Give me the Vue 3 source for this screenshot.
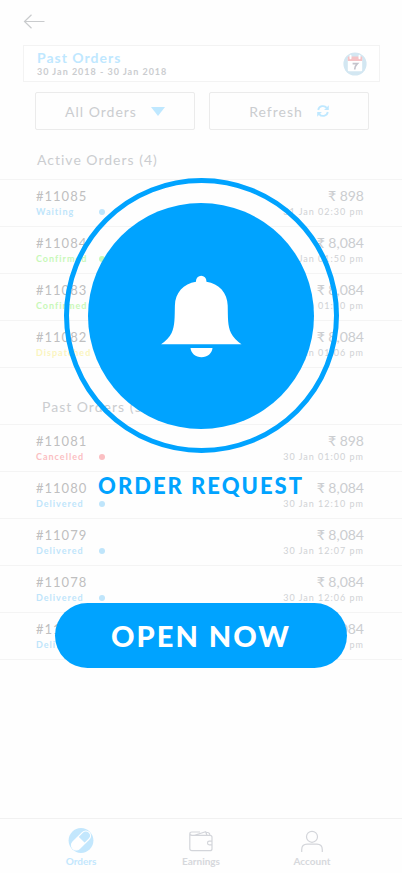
<script setup>
const sections = [
  {
    title: 'Active Orders (4)',
    key: 'active',
    orders: [
      { id: '#11085', status: 'Waiting', price: '₹ 898', time: '31 Jan 02:30 pm' },
      { id: '#11084', status: 'Confirmed', price: '₹ 8,084', time: '31 Jan 01:50 pm' },
      { id: '#11083', status: 'Confirmed', price: '₹ 8,084', time: '31 Jan 01:10 pm' },
      { id: '#11082', status: 'Dispatched', price: '₹ 8,084', time: '31 Jan 01:06 pm' },
    ],
  },
  {
    title: 'Past Orders (5)',
    key: 'past',
    orders: [
      { id: '#11081', status: 'Cancelled', price: '₹ 898', time: '30 Jan 01:00 pm' },
      { id: '#11080', status: 'Delivered', price: '₹ 8,084', time: '30 Jan 12:10 pm' },
      { id: '#11079', status: 'Delivered', price: '₹ 8,084', time: '30 Jan 12:07 pm' },
      { id: '#11078', status: 'Delivered', price: '₹ 8,084', time: '30 Jan 12:06 pm' },
      { id: '#11077', status: 'Delivered', price: '₹ 8,084', time: '30 Jan 12:05 pm' },
    ],
  },
]
</script>

<template>
  <div class="screen">
    <header class="top">
      <button class="back" type="button" aria-label="Back">
        <svg width="22" height="15" viewBox="0 0 22 15" fill="none" stroke="#c9cbcd" stroke-width="1.2">
          <path d="M21.5 7.5H1.5M8.5 .8L1.5 7.5l7 6.7" />
        </svg>
      </button>
      <div class="range">
        <div>
          <h1>Past Orders</h1>
          <p>30 Jan 2018 - 30 Jan 2018</p>
        </div>
        <button class="calendar" type="button" aria-label="Choose dates">
          <svg width="24" height="24" viewBox="0 0 24 24">
            <circle cx="12" cy="12" r="11.6" fill="#d3e7f2" />
            <rect x="4.8" y="5" width="14.4" height="14.2" rx="1" fill="#fff" />
            <path d="M4.8 9V5.5q0-1 1-1h12.4q1 0 1 1V9z" fill="#f5c3c6" />
            <path d="M7.500 3.800v2.400M16.500 3.800v2.400" stroke="#fff" stroke-width="2" stroke-linecap="round" />
            <path d="M9.600 11.600h4.800c-1.800 1.700-2.600 3.400-2.700 5.900" fill="none" stroke="#c4c4cc" stroke-width="1.7" />
          </svg>
        </button>
      </div>
      <div class="actions">
        <button class="action" type="button">
          All Orders
          <svg width="14" height="9" viewBox="0 0 14 9"><path d="M0 0h14L7 9z" fill="#bfe8ff" /></svg>
        </button>
        <button class="action" type="button">
          Refresh
          <svg width="12" height="12" viewBox="0 0 12 12" fill="none" stroke="#bfe8ff" stroke-width="1.8">
            <path d="M1.200 5A4.900 4.900 0 0 1 9.800 2.900M10.800 7A4.900 4.900 0 0 1 2.200 9.100" />
            <path d="M11.800.3v4.700H7.100zM.2 11.700V7h4.700z" fill="#bfe8ff" stroke="none" />
          </svg>
        </button>
      </div>
    </header>

    <main>
      <section v-for="s in sections" :key="s.key" :class="s.key">
        <h2>{{ s.title }}</h2>
        <ul>
          <li v-for="o in s.orders" :key="o.id">
            <div class="left">
              <span class="id">{{ o.id }}</span>
              <span class="status" :class="o.status.toLowerCase()">{{ o.status }}</span>
            </div>
            <div class="right">
              <span class="price">{{ o.price }}</span>
              <span class="time">{{ o.time }}</span>
            </div>
          </li>
        </ul>
      </section>
    </main>

    <nav>
      <a href="#orders" class="current">
        <svg width="26" height="25" viewBox="0 0 26 25">
          <circle cx="13" cy="12.5" r="12.4" fill="#c3e7fd" />
          <g transform="rotate(45 13 12.5)">
            <rect x="8.3" y="1" width="9.4" height="23" rx="4.7" fill="#c3e7fd" stroke="#fff" stroke-width="1.2" />
            <path d="M8.3 11.5h9.4v7.8a4.700 4.700 0 0 1-9.400 0z" fill="#fff" />
          </g>
        </svg>
        Orders
      </a>
      <a href="#earnings">
        <svg width="26" height="25" viewBox="0 0 26 25" fill="none" stroke="#d3d5da" stroke-width="1.2">
          <path d="M3.500 7.300h18.500q2 0 2 2v11.400q0 2-2 2H4q-2.200 0-2.200-2.200V6q0-2 2.200-2H12M1.800 5.600q0 1.700 2.200 1.700M6.500 7.300l11.200-3.600 1.200 3.600M18 4.500h2q1.800.3 2 2.800" />
          <path d="M24 13.200h-2.700a1.800 1.800 0 0 0 0 3.600H24" />
        </svg>
        Earnings
      </a>
      <a href="#account">
        <svg width="26" height="25" viewBox="0 0 26 25" fill="none" stroke="#d3d5da" stroke-width="1.2">
          <circle cx="13" cy="8.8" r="5.5" />
          <path d="M2.700 24v-2.300q0-5.500 5.500-5.500h9.600q5.500 0 5.500 5.500V24" />
        </svg>
        Account
      </a>
    </nav>

    <div class="overlay" role="dialog" aria-labelledby="request-title">
      <div class="ring">
        <div class="disc">
          <svg width="82" height="84" viewBox="0 0 82 84" fill="#fff">
            <path d="M36 7.800V7a5.200 5.200 0 0 1 10.400 0V7.800C59 9.500 67.500 19 67.700 31.500 68 43 67.500 52 71 59q3 6 10.500 11.300H1.100Q8.600 65 11.600 59C15 52 14.600 43 14.900 31.500 15.100 19 23.500 9.500 36 7.800z" />
            <path d="M30.500 74h22c-.5 5.500-5.200 9.300-11 9.300s-10.500-3.800-11-9.300z" />
          </svg>
        </div>
      </div>
      <h2 id="request-title">ORDER REQUEST</h2>
      <button class="open" type="button">OPEN NOW</button>
    </div>
  </div>
</template>

<style>
body {
  margin: 0;
  background: #fefefe;
}
</style>

<style scoped>
.screen {
  position: relative;
  display: flex;
  flex-direction: column;
  min-height: 100vh;
  font-family: Lato, "Liberation Sans", sans-serif;
  letter-spacing: 1px;
  color: #cbcdd0;
  background: #fefefe;
}
h1, h2, p, ul {
  margin: 0;
  padding: 0;
  font-weight: 400;
}
button {
  display: block;
  padding: 0;
  border: 0;
  background: none;
  font: inherit;
  letter-spacing: inherit;
  color: inherit;
  cursor: pointer;
}
svg {
  display: block;
  flex: none;
}
.top {
  padding: 14px 22px 0 23px;
}
.range {
  display: flex;
  align-items: center;
  justify-content: space-between;
  box-sizing: border-box;
  height: 37px;
  margin-top: 16px;
  padding: 0 12px 0 13px;
  border: 1px solid #f3f3f3;
  background: #fff;
}
.range h1 {
  font-size: 14px;
  line-height: 16px;
  font-weight: 700;
  color: #bfe8ff;
}
.range p {
  font-size: 9px;
  line-height: 12px;
  font-weight: 700;
}
.actions {
  display: grid;
  grid-template-columns: 1fr 1fr;
  gap: 14px;
  margin-top: 10px;
  padding: 0 11px 0 12px;
}
.action {
  display: flex;
  align-items: center;
  justify-content: center;
  gap: 14px;
  height: 38px;
  border: 1px solid #ebebeb;
  border-radius: 2px;
  font-size: 14px;
}
section h2 {
  padding: 20px 37px 9px;
  font-size: 14px;
  line-height: 20px;
}
.past h2 {
  padding: 29px 42px 7px;
}
ul {
  list-style: none;
  border-bottom: 1px solid #f4f4f4;
}
li {
  display: flex;
  justify-content: space-between;
  box-sizing: border-box;
  height: 47px;
  padding: 7px 38px 0 36px;
  border-top: 1px solid #f4f4f4;
}
.left, .right {
  display: flex;
  flex-direction: column;
}
.right {
  align-items: flex-end;
}
.id, .price {
  font-size: 13px;
  line-height: 18px;
}
.id {
  color: #bfbfc0;
}
.price {
  font-size: 14px;
  letter-spacing: 0;
}
.status, .time {
  font-size: 9px;
  line-height: 14px;
}
.time {
  color: #d0d2d5;
}
.status {
  display: flex;
  align-items: center;
  justify-content: space-between;
  width: 69px;
  font-weight: 700;
}
.status::after {
  content: "";
  width: 6px;
  height: 6px;
  border-radius: 50%;
  background: currentColor;
}
.waiting, .delivered {
  color: #bfe5fb;
}
.confirmed {
  color: #c8f8b8;
}
.dispatched {
  color: #fbf5bf;
}
.cancelled {
  color: #fbbfc2;
}
nav {
  display: grid;
  grid-template-columns: 162fr 78fr 144fr 18fr;
  box-sizing: border-box;
  height: 55px;
  margin-top: auto;
  padding-top: 9px;
  border-top: 1px solid #f1f1f1;
}
nav a {
  display: flex;
  flex-direction: column;
  align-items: center;
  gap: 2px;
  font-size: 10px;
  line-height: 12px;
  font-weight: 700;
  letter-spacing: 0;
  color: #d6d8dc;
  text-decoration: none;
}
nav .current {
  color: #c3e7fd;
}
.overlay {
  position: absolute;
  inset: 0;
  display: flex;
  flex-direction: column;
  align-items: center;
  padding-top: 178px;
}
.ring, .disc {
  display: flex;
  align-items: center;
  justify-content: center;
  box-sizing: border-box;
  border-radius: 50%;
}
.ring {
  width: 275px;
  height: 275px;
  border: 5px solid #00a3ff;
}
.disc {
  width: 226px;
  height: 226px;
  background: #00a3ff;
}
.overlay h2 {
  margin-top: 19px;
  font-size: 22px;
  line-height: 28px;
  font-weight: 900;
  letter-spacing: 2px;
  color: #00a3ff;
}
.open {
  width: 292px;
  height: 65px;
  margin-top: 103px;
  border-radius: 33px;
  font-size: 29px;
  font-weight: 900;
  letter-spacing: 2px;
  color: #fff;
  background: #00a3ff;
}
</style>
